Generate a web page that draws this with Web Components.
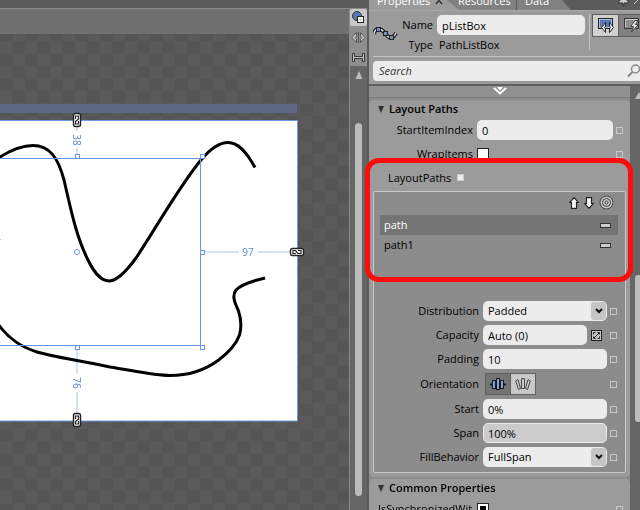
<!DOCTYPE html>
<html lang="en">
<head>
<meta charset="utf-8">
<title>Path list box editor</title>
<style>
html, body { margin: 0; height: 100%; overflow: hidden; background: #5b5b5b; }
body { font: 11px/14px "Open Sans", "Noto Sans", sans-serif; color: #000; }
</style>
</head>
<body>
<editor-app></editor-app>
<script>
const base = `<style>
*{box-sizing:border-box}
button,input,select{font:inherit;color:inherit;margin:0;padding:0;border:0;border-radius:0;outline-offset:-2px}
button{background:none;display:grid;place-items:center}
svg{display:block}
</style>`;
function define(name, render, after) {
  customElements.define(name, class extends HTMLElement {
    connectedCallback() {
      if (this.shadowRoot) return;
      this.attachShadow({ mode: 'open' }).innerHTML = base + render(this);
      if (after) after(this.shadowRoot, this);
    }
  });
}

define('editor-app', () => `<style>
:host{display:grid;grid-template-columns:minmax(0,1fr) 20px 271px;height:100vh;overflow:hidden}
</style>
<design-canvas></design-canvas><tool-strip></tool-strip><properties-panel></properties-panel>`);

const link = `<rect x="-3.5" y="-6.5" width="7" height="13" rx="2" fill="#fff" stroke="#222" stroke-width="1.4"/>
<path d="M-1.500 -1V-4H1.500V-1L-1.500 1.500V4H1.500V1" fill="none" stroke="#222" stroke-width="1.2"/>`;
define('design-canvas', () => `<style>
:host{display:grid;grid-template-rows:8px 26px minmax(0,1fr);min-width:0}
.bar{background:#707070;border-top:1px solid #8b8b8b}
.board{background:repeating-conic-gradient(#555 0 25%,#5a5a5a 0 50%) 0 7px/25px 25px;overflow:hidden}
text{font:10px "Open Sans",sans-serif;fill:#5a84dd;text-anchor:middle}
</style>
<div></div><div class="bar"></div>
<div class="board"><svg width="100%" height="100%" aria-label="Artboard with two paths">
<g transform="translate(0,-34)" fill="none">
<rect x="-2" y="104" width="299" height="9" fill="#5c6881"/>
<rect x="-2" y="120.5" width="299.5" height="300.500" fill="#fff" stroke="#6b97e6"/>
<g stroke="#000" stroke-width="3">
<path d="M-1 157.500C11 150 22 145.500 33 145.500C49 145.500 58 157 64 180C71 210 76 236 88 260C95 274 101 281 109 281C118 281 128 269 136 258C158 225 178 188 201 160C211 148 219 142.500 228 142.500C238 142.500 246 151 255 167.500"/>
<path d="M-2 324C8 338 20 347 37 352C54 357 77 360 110 367C135 371 155 375.500 170 375.500C190 375.500 205 370 218 360.500C228 353 236 345 239.500 335C242 326 241.500 320 238.500 311C235 303 231.500 296 236 290C241 284.500 252 281 265 278"/>
</g>
<g stroke="#d3e2fa" stroke-width="2" style="mix-blend-mode:multiply"><path d="M77 127V131M77 148V154M77 349V373M77 392V413M205 252H239M258 252H290"/></g>
<path d="M0 158.500H200.500V345.500H0" stroke="#6394ea"/>
<g stroke="#6b97e6" fill="#fff"><rect x="75.500" y="154.500" width="4" height="4"/><rect x="200.500" y="154.500" width="4" height="4"/><rect x="200.500" y="250.500" width="4" height="4"/><rect x="200.500" y="345.500" width="4" height="4"/><rect x="75.500" y="345.500" width="4" height="4"/><circle cx="77" cy="252" r="2.500"/></g>
<g transform="translate(77,120)">${link}</g><g transform="translate(77,420)">${link}</g><g transform="translate(297,252) rotate(90)">${link}</g>
<path d="M0 239.500H1" stroke="#bbb"/>
<text x="248" y="256">97</text><text transform="translate(73,140) rotate(90)">38</text><text transform="translate(73,383) rotate(90)">76</text>
</g></svg></div>`);

define('tool-strip', () => `<style>
:host{display:flex;flex-direction:column;padding-top:8px;background:#5b5b5b}
.top{flex:none;height:1px;background:#8b8b8b;margin-right:2px}
.col{flex:1;display:flex;flex-direction:column;background:#656565;border-left:1px solid #8b8b8b;margin-right:2px;min-height:0}
.tools{background:#8e8e8e;height:57px;display:grid;grid-template-rows:repeat(3,17px);align-content:space-between}
.tools button[aria-pressed=true]{background:#c9c9c9;border-radius:2px}
.up{height:17px}
.track{flex:1;display:grid;justify-content:center;padding:40px 0 14px}
.thumb{width:7px;border-radius:4px;background:#bcbcbc}
</style>
<div class="top"></div><div class="col"><div class="tools">
<button aria-label="Effect rendering" aria-pressed="true"><svg width="15" height="15" fill="none"><circle cx="6" cy="6" r="4.500" fill="#5878b8" stroke="#333"/><rect x="6.500" y="6.500" width="6" height="6" fill="#fff" stroke="#222"/><rect x="8.500" y="8.500" width="2" height="2" fill="#bbb"/></svg></button>
<button aria-label="Show handles"><svg width="15" height="13" fill="none" stroke="#555" stroke-width="1"><path d="M5.500 1.500L1 6.500L5.500 11.500V8L4 6.500L5.500 5ZM9.500 1.500L14 6.500L9.500 11.500V8L11 6.500L9.500 5Z" fill="#ccc"/><path d="M7.500 1V12"/></svg></button>
<button aria-label="Snap lines"><svg width="15" height="11" fill="none" stroke="#333"><path d="M1.500 1.500H3.500V4.500H11.500V1.500H13.500V9.500H11.500V6.500H3.500V9.500H1.500Z" fill="#c5c5c5"/></svg></button>
</div><button class="up" aria-label="Scroll up"><svg width="8" height="8"><path d="M4 0L7.500 8H.5Z" fill="#bcbcbc"/></svg></button><div class="track"><div class="thumb"></div></div></div>`);

define('properties-panel', () => `<style>
:host{position:relative;display:grid;grid-template-rows:10px 76px minmax(0,1fr);min-width:0;height:100vh}
.body{display:grid;grid-template-columns:minmax(0,1fr) 10px;overflow:hidden}
.list{background:#8c8c8c;min-width:0}
.more{height:12px;display:grid;place-items:center;width:100%;border-bottom:1px solid #7d7d7d;background:#919191}
.bar{background:#656565;display:flex;flex-direction:column;align-items:flex-end;overflow:hidden;padding-top:6px}
.thumb{flex:none;width:5px;height:147px;margin-top:176px;border-radius:3px 0 0 3px;background:#bcbcbc}
.mark{position:absolute;left:-4px;right:7px;top:158px;height:124px;border:5px solid #fb0d0d;border-radius:14px;pointer-events:none}
.group{border:1px solid #c8c8c8;border-radius:2px;margin:0 4px 3px;padding:0 0 3px;background:#8c8c8c}
</style>
<panel-tabs></panel-tabs><element-header></element-header>
<div class="body"><div class="list">
<button class="more" aria-label="Show more"><svg width="14" height="9" fill="none" stroke="#fff" stroke-width="2"><path d="M1 1L7 6.500L13 1M5 0L7 2L9 0"/></svg></button>
<prop-section heading="Layout Paths">
<prop-field label="StartItemIndex" value="0" outer></prop-field>
<prop-field label="WrapItems" kind="check" outer></prop-field>
<paths-title></paths-title>
<div class="group"><path-list></path-list>
<prop-field label="Distribution" value="Padded" kind="select"></prop-field>
<prop-field label="Capacity" value="Auto (0)" kind="auto"></prop-field>
<prop-field label="Padding" value="10"></prop-field>
<prop-field label="Orientation" kind="orient"></prop-field>
<prop-field label="Start" value="0%"></prop-field>
<prop-field label="Span" value="100%" muted></prop-field>
<prop-field label="FillBehavior" value="FullSpan" kind="select"></prop-field>
</div></prop-section>
<prop-section heading="Common Properties"><prop-field label="IsSynchronizedWit..." kind="mixed" outer></prop-field></prop-section>
</div><div class="bar"><svg width="5" height="7"><path d="M4 0L0 7H8Z" fill="#bcbcbc"/></svg><div class="thumb"></div></div></div>
<div class="mark"></div>`);

define('panel-tabs', () => `<style>
:host{display:flex;align-items:flex-end;height:10px;overflow:hidden;color:#fff;background:#5b5b5b}
button{flex:none;height:20px;display:flex;align-items:center;background:#818181;padding-top:2px}
.on{width:90px;padding-left:8px;gap:5px;background:#9b9b9b;clip-path:polygon(0 0,66px 0,90px 100%,0 100%);margin-right:-14px;z-index:1}
.res{width:72px;padding-left:13px;border-right:1px solid #5b5b5b;flex:none}
.data{width:54px;padding-left:8px;clip-path:polygon(0 0,36px 0,100% 100%,0 100%)}
.pin{margin-left:auto;background:none}
</style>
<button class="on"><span>Properties</span><svg width="8" height="9" fill="none" stroke="#333" stroke-width="1.500"><path d="M1 0L7 7M7 0L1 7"/></svg></button><button class="res">Resources</button><button class="data">Data</button>
<button class="pin" aria-label="Pin panel"><svg width="22" height="12" fill="#ccc" stroke="#333"><path d="M3 0H8V5H10V8H6V11H5V8H1V5H3Z"/><path d="M16 9L22 3" stroke="#ccc"/></svg></button>`);

define('element-header', () => `<style>
:host{display:block;background:#9b9b9b;border-top:1px solid #a8a8a8;border-bottom:2px solid #5f5f5f;overflow:hidden}
.top{display:grid;grid-template-columns:26px 34px minmax(0,1fr) 5px 50px;height:46px;border-bottom:1px solid #c5c5c5;margin-left:4px}
.top>svg{margin:14px 0 0 0}
.labels,.values{display:grid;grid-template-rows:20px 20px;padding-top:4px;align-items:center}
.labels{justify-items:end}
.values{padding-left:4px}
.values input{width:100%;height:20px;background:#ececec;border-radius:5px;padding:0 5px;min-width:0}
.values span{padding-left:2px}
.rule{border-right:1px solid #c5c5c5;margin:3px 0 6px}
.modes{display:flex;padding:3px 0 0 2px}
.modes button{width:27px;height:23px;border:1px solid #5f5f5f;background:#808080;flex:none}
.modes button+button{margin-left:-1px}
.modes button[aria-pressed=true]{background:#d0d0d0}
.search{display:flex;align-items:center;height:20px;margin:4px 0 0 4px;background:#ececec;border-radius:4px 0 0 4px}
.search input{flex:1;min-width:0;background:none;padding-left:6px;font-style:italic}
.search input::placeholder{color:#333;opacity:1}
</style>
<div class="top"><svg width="25" height="19" fill="none"><path d="M1 9C2 3 7 2 12 8C16 14 19 15 23 8" stroke="#222" stroke-width="4"/><path d="M1 9C2 3 7 2 12 8C16 14 19 15 23 8" stroke="#ddd" stroke-width="1.500"/><g fill="#7590c8" stroke="#222"><rect x="3.500" y="2.500" width="4" height="4"/><rect x="10.500" y="6.500" width="4" height="4"/><rect x="16.500" y="10.500" width="4" height="4"/></g></svg>
<div class="labels"><label for="name">Name</label><span>Type</span></div>
<div class="values"><input id="name" value="pListBox"><span>PathListBox</span></div>
<div class="rule"></div>
<div class="modes"><button aria-label="Properties" aria-pressed="true"><svg width="18" height="17"><rect x="1.500" y="1.500" width="14" height="10" fill="#5878b8" stroke="#222"/><rect x="2.500" y="2.500" width="12" height="8" fill="none" stroke="#eee" stroke-width=".6"/><path d="M8.500 5.500L4.500 10.500L8.500 15.500V12L7.500 10.500L8.500 9ZM12.500 5.500L16.500 10.500L12.500 15.500V12L13.500 10.500L12.500 9Z" fill="#fff" stroke="#222"/></svg></button>
<button aria-label="Events"><svg width="18" height="17"><path d="M1.500 1.500H15.500V11.500H1.500Z" fill="#8f8f8f" stroke="#333"/><path d="M2.500 10.500V2.500H14.500" fill="none" stroke="#ccc"/><path d="M12 3.500L7.500 9.500H10.500L8.500 15L15.500 7.500H12.500L15 3.500Z" fill="#ddd" stroke="#444"/></svg></button></div></div>
<div class="search"><input aria-label="Search" placeholder="Search"><svg width="13" height="14" fill="none" stroke="#888" stroke-width="1.500"><circle cx="8.500" cy="5" r="4"/><path d="M5.500 8L1 12.500" stroke-width="2"/></svg></div>`);

define('prop-section', el => `<style>
:host{display:block;background:#9b9b9b;border-radius:5px;margin-top:2px;padding-bottom:1px}
:host + :host{margin-top:4px}
h2{display:flex;align-items:center;gap:5px;margin:0;height:18px;padding-left:9px;font-size:11px;font-weight:600;line-height:18px}
</style><h2><svg width="6" height="7"><path d="M0 0H6L3 7Z" fill="#333"/></svg>${el.getAttribute('heading')}</h2><slot></slot>`);

define('paths-title', () => `<style>
:host{display:flex;align-items:center;gap:6px;height:25px;padding:0 0 2px 19px}
button{width:7px;height:7px;background:#eee;border:1px solid #ccc}
</style><span>LayoutPaths</span><button aria-label="LayoutPaths options"></button>`);

define('path-list', () => `<style>
:host{display:block;padding:0 7px 4px 6px}
.tools{display:flex;justify-content:flex-end;align-items:center;height:21px;margin-bottom:2px;padding-right:4px;gap:5px}
ul{list-style:none;margin:0;padding:0;height:80px}
li{display:flex;align-items:center;justify-content:space-between;height:20px;padding:0 7px 0 4px}
li.on{background:#747474;color:#fff}
</style>
<div class="tools"><button aria-label="Move up"><svg width="10" height="12"><path d="M5 .7L9.300 5.500H7.500V11.300H2.500V5.500H.7Z" fill="#fff" stroke="#222" stroke-width="1.200"/></svg></button><button aria-label="Move down"><svg width="10" height="12"><path d="M5 11.300L9.300 6.500H7.500V.7H2.500V6.500H.7Z" fill="#fff" stroke="#222" stroke-width="1.200"/></svg></button><button aria-label="Pick path"><svg width="15" height="15" fill="none"><circle cx="7.500" cy="7.500" r="6.500" fill="#c5c5c5" stroke="#444"/><circle cx="7.500" cy="7.500" r="4" stroke="#444"/><circle cx="7.500" cy="7.500" r="1.500" stroke="#444"/></svg></button></div>
<ul>${['path', 'path1'].map((t, i) => `<li class="${i ? '' : 'on'}"><span>${t}</span><button aria-label="Remove ${t}"><svg width="11" height="5"><rect x=".5" y=".5" width="10" height="4" fill="#ccc" stroke="#333"/></svg></button></li>`).join('')}</ul>`);

define('prop-field', el => {
  const kind = el.getAttribute('kind') || 'text', v = el.getAttribute('value') || '';
  const text = `<input id="c" class="box" value="${v}">`;
  const controls = {
    text,
    check: '<input id="c" type="checkbox">',
    mixed: '<input id="c" type="checkbox">',
    select: `<div class="pick"><select id="c" class="box"><option>${v}</option></select><span><svg width="8" height="6" fill="none" stroke="#111" stroke-width="2"><path d="M1 1L4 4L7 1"/></svg></span></div>`,
    auto: `<div class="auto">${text}<button aria-label="Set to auto"><svg width="11" height="11" fill="none" stroke="#222"><rect x=".5" y=".5" width="10" height="10" fill="#c5c5c5"/><path d="M3 8L8 3M2.500 4.500V2.500H4.500M6.500 8.500H8.500V6.500M6.500 2.500H8.500V4.500M2.500 6.500V8.500H4.500"/></svg></button></div>`,
    orient: `<div class="orient" role="group" aria-labelledby="l"><button aria-label="No rotation" aria-pressed="true"><svg width="16" height="12" stroke="#1a1a1a"><path d="M0 6.500H16" stroke-width="2"/><g fill="#86a0dc"><rect x="2.500" y="2.500" width="3" height="8"/><rect x="6.500" y=".5" width="3" height="11"/><rect x="10.500" y="2.500" width="3" height="8"/></g></svg></button><button aria-label="Orient to path"><svg width="16" height="12" stroke="#444" fill="#ccc"><path d="M3 1.500L5.500 10.500L3.500 11.500L.7 3ZM13 1.500L10.500 10.500L12.500 11.500L15.300 3ZM6.500 .7H9.500V10.500H6.500Z"/></svg></button></div>`
  };
  const label = kind === 'orient' ? `<span class="lab" id="l">${el.getAttribute('label')}</span>` : `<label class="lab" for="c">${el.getAttribute('label')}</label>`;
  return `<style>
:host{display:grid;grid-template-columns:106px minmax(0,1fr) 7px;align-items:center;column-gap:3px;height:24px;padding-right:8px}
:host([outer]){grid-template-columns:105px minmax(0,1fr) 7px;padding-right:7px}
:host([kind=orient]){height:26px}
.lab{justify-self:end;white-space:nowrap;padding-right:1px}
:host([kind=mixed]) .lab{justify-self:start;margin-left:9px;padding:0}
.box{width:100%;height:20px;border-radius:5px;background:#ececec;padding:0 5px;appearance:none;min-width:0}
:host([muted]) .box{background:#cbcbcb;border:1px solid #ececec;padding:0 4px}
.pick{display:grid}
.pick>*{grid-area:1/1}
.pick span{justify-self:end;width:15px;display:grid;place-items:center;background:#c5c5c5;border-radius:3px;margin:1px;pointer-events:none}
.auto{display:grid;grid-template-columns:minmax(0,1fr) 11px;gap:4px;align-items:center;padding-right:5px}
.orient{display:flex;margin-left:2px}
.orient button{width:26px;height:22px;border:1px solid #5f5f5f;background:#c9c9c9}
.orient button+button{margin-left:-1px}
.orient button[aria-pressed=true]{background:#747474}
input[type=checkbox]{appearance:none;width:12px;height:12px;background:#fff;border:1px solid #222}
input[type=checkbox]:indeterminate{background:linear-gradient(#000 0 0) center/6px 6px no-repeat #fff}
.dot{width:7px;height:7px;border:1px solid #c8c8c8}
</style>${label}${controls[kind]}<button class="dot" aria-label="${el.getAttribute('label')} options"></button>`;
}, (root, el) => { if (el.getAttribute('kind') === 'mixed') root.querySelector('input').indeterminate = true; });
</script>
</body>
</html>
